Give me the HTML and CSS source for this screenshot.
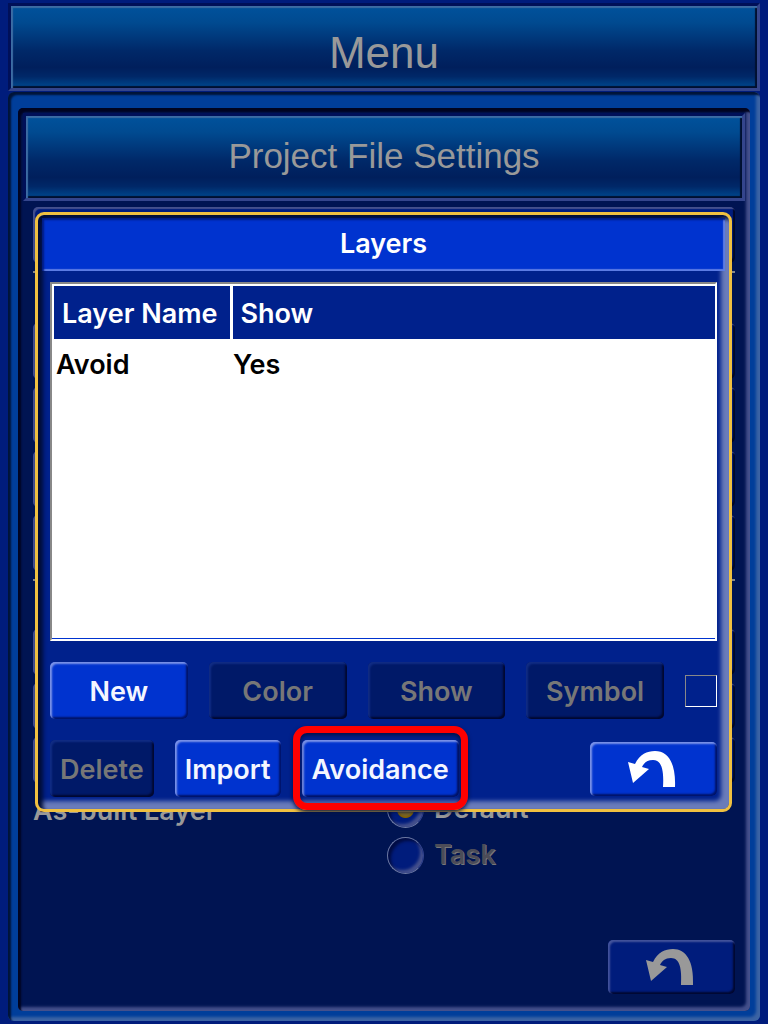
FILE: index.html
```html
<!DOCTYPE html>
<html lang="en">
<head>
    <meta charset="UTF-8">
    <meta name="viewport" content="width=device-width, initial-scale=1.0">
    <title>Menu - Layers</title>
    <link rel="stylesheet" href="styles.css">
</head>
<body>
    <header class="bar menu-bar">
        <h1>Menu</h1>
    </header>

    <main class="panel">
        <section class="settings">
            <div class="bar settings-bar">
                <h2>Project File Settings</h2>
            </div>

            <div class="settings-body">
                <div class="slot"></div>
                <hr class="group-top">
                <div class="slot"></div>
                <div class="slot"></div>
                <div class="slot"></div>
                <div class="slot"></div>
                <hr class="group-bottom">
                <div class="slot slot-small"></div>
                <div class="slot slot-small"></div>
                <div class="slot slot-small"></div>

                <div class="as-built" role="radiogroup" aria-labelledby="asBuiltLabel">
                    <span id="asBuiltLabel">As-built Layer</span>
                    <div class="options">
                        <label><input type="radio" name="asBuilt" value="default" checked> Default</label>
                        <label class="off"><input type="radio" name="asBuilt" value="task"> Task</label>
                    </div>
                </div>

                <button type="button" class="btn btn-back btn-dim" aria-label="Back">
                    <svg viewBox="0 0 48 36" width="48" height="36"><path d="M0 11 L7 13 C12 3 19 0 27 0 C40 0 48 12 47 36 H35 C36 20 34 9 25 9 C19 9 16 12 14 16 L21 18 L5 32 Z"/></svg>
                </button>
            </div>
        </section>
    </main>

    <div class="dialog" role="dialog" aria-labelledby="dialogTitle">
        <h3 id="dialogTitle" class="dialog-title">Layers</h3>
        <div class="dialog-body">
            <div class="list">
                <table>
                    <thead>
                        <tr><th class="col-name">Layer Name</th><th>Show</th></tr>
                    </thead>
                    <tbody>
                        <tr><td>Avoid</td><td>Yes</td></tr>
                    </tbody>
                </table>
            </div>

            <div class="row row-top">
                <button type="button" class="btn">New</button>
                <button type="button" class="btn" disabled>Color</button>
                <button type="button" class="btn" disabled>Show</button>
                <button type="button" class="btn" disabled>Symbol</button>
                <div class="swatch"></div>
            </div>

            <div class="row row-bottom">
                <button type="button" class="btn" disabled>Delete</button>
                <button type="button" class="btn">Import</button>
                <div class="marked">
                    <button type="button" class="btn">Avoidance</button>
                    <span class="marker"></span>
                </div>
                <button type="button" class="btn btn-back" aria-label="Back">
                    <svg viewBox="0 0 48 36" width="48" height="36"><path d="M0 11 L7 13 C12 3 19 0 27 0 C40 0 48 12 47 36 H35 C36 20 34 9 25 9 C19 9 16 12 14 16 L21 18 L5 32 Z"/></svg>
                </button>
            </div>
        </div>
    </div>
</body>
</html>
```
FILE: styles.css
```css
* {
    box-sizing: border-box;
}

body {
    margin: 0;
    padding: 3px 8px;
    min-height: 100vh;
    display: flex;
    flex-direction: column;
    gap: 1px;
    position: relative;
    background-color: #001c7c;
    color: #999;
    font-family: Inter, "Liberation Sans", Arial, sans-serif;
    font-size: 27px;
    font-weight: 600;
    line-height: 32px;
}

h1,
h2,
h3 {
    margin: 0;
}

/* glossy title bars */
.bar {
    display: flex;
    justify-content: center;
    align-items: center;
    height: 88px;
    border: 3px solid;
    border-color: #001058 #34458c #34458c #001058;
    background: linear-gradient(#00529c, #004a90 20%, #002868 55%, #001f5c 75%, #002868 86%, #004a90);
    box-shadow: inset 2px 2px 1px #3c6ca4, inset -2px -2px 1px #001030;
}

.menu-bar h1 {
    padding-top: 12px;
    font-family: "Liberation Sans", Arial, sans-serif;
    font-size: 44px;
    font-weight: normal;
    line-height: 48px;
}

.settings-bar h2 {
    font-family: "Liberation Sans", Arial, sans-serif;
    font-size: 35px;
    font-weight: normal;
    line-height: 40px;
    padding-bottom: 2px;
}

.panel {
    flex: 1;
    display: flex;
    padding: 16px 10px 10px;
    border-radius: 6px;
    background-color: #003e9a;
    box-shadow: inset 3px 3px 2px #001438, inset -4px -4px 3px #3c64a4;
}

.settings {
    flex: 1;
    display: flex;
    flex-direction: column;
    padding: 5px;
    border-radius: 5px;
    background-color: #001452;
    box-shadow: inset 3px 4px 2px #000420, inset -4px -4px 3px #44508c;
}

.settings-body {
    flex: 1;
    display: flex;
    flex-direction: column;
    gap: 8px;
    padding: 6px 10px 12px;
}

.slot {
    height: 56px;
    border-radius: 5px;
    background-color: #001c7c;
    box-shadow: inset 2px 2px 1px #44508c, inset -2px -2px 1px #000828;
}

.slot-small {
    height: 46px;
}

hr {
    width: 100%;
    height: 2px;
    margin: 0;
    border: 0;
    background-color: #888;
}

.group-top {
    margin-bottom: 42px;
}

.group-bottom {
    margin-bottom: 40px;
}

.as-built {
    display: grid;
    grid-template-columns: 354px 1fr;
}

.options {
    display: flex;
    flex-direction: column;
    gap: 10px;
}

.options label {
    display: flex;
    align-items: center;
    gap: 10px;
    height: 36px;
    line-height: 36px;
}

.as-built > span {
    line-height: 40px;
}

.off {
    color: #4c4c58;
    text-shadow: 1px 1px #777;
}

input[type="radio"] {
    appearance: none;
    width: 37px;
    height: 37px;
    margin: 0;
    border-radius: 50%;
    border: 1px solid;
    border-color: #6c78a0 #34458c #6c78a0 #6c78a0;
    background-color: #001c7c;
    box-shadow: inset 3px 3px 3px #000c44, inset -3px -3px 3px #44508c;
}

input[type="radio"]:checked {
    background-image: radial-gradient(#806820 6px, #806000 8px, transparent 9px);
}

/* buttons */
.btn {
    height: 57px;
    padding: 2px 10px 0;
    border: 0;
    border-radius: 5px;
    background-color: #0033cf;
    color: #f4f6ff;
    font: inherit;
    box-shadow: inset 2px 2px 2px #7c94e8, inset -2px -2px 2px #001468;
}

.btn:disabled {
    background-color: #001968;
    color: #777;
    box-shadow: inset 2px 2px 2px #102c84, inset -2px -2px 2px #000830;
}

.btn-back {
    display: flex;
    justify-content: center;
    align-items: center;
    width: 127px;
    height: 54px;
    padding: 0;
    margin-left: auto;
}

.btn-back svg {
    margin-right: 3px;
    fill: #fff;
}

.btn-dim {
    margin-top: auto;
    background-color: #001c7c;
    box-shadow: inset 2px 2px 2px #44549c, inset -2px -2px 2px #000830;
}

.btn-dim svg {
    fill: #999;
}

/* layers dialog */
.dialog {
    position: absolute;
    top: 212px;
    left: 35px;
    right: 36px;
    padding: 3px 4px 12px;
    border: 3px solid #f0c040;
    border-radius: 9px;
    background-color: #00218c;
    box-shadow: inset 5px 4px 4px #000c34, inset -8px -8px 4px #6a7cba;
    color: #fff;
}

.dialog-title {
    height: 53px;
    font-size: 27px;
    font-weight: 600;
    line-height: 52px;
    text-align: center;
    background-color: #0033cf;
    box-shadow: inset 2px 2px 2px #001c80, inset -2px -2px 1px #5c7ce4;
}

.dialog-body {
    padding: 11px 8px 0;
}

.list {
    height: 359px;
    padding: 2px 0 2px 2px;
    border: 2px solid;
    border-color: #888 #fff #fff #888;
    background-color: #fff;
    box-shadow: inset 0 -1px #0033cf;
}

table {
    width: 100%;
    border-collapse: collapse;
}

th {
    height: 53px;
    padding: 2px 8px 0;
    background-color: #00218c;
    font-weight: 600;
    text-align: left;
}

.col-name {
    width: 177px;
    border-right: 3px solid #fff;
}

td {
    height: 52px;
    padding: 0 2px;
    color: #000;
}

.row {
    display: flex;
    align-items: center;
    gap: 21px;
    margin-top: 21px;
}

.row-top .btn {
    flex: 1;
}

.swatch {
    width: 32px;
    height: 32px;
    border: 1px solid;
    border-color: #888 #fff #fff #888;
}

.marked {
    position: relative;
}

.marker {
    position: absolute;
    inset: -14px -9px -13px;
    border: 7px solid #f00;
    border-radius: 14px;
    box-shadow: 0 2px 4px #001040, inset 0 2px 4px #001040;
    pointer-events: none;
}
```
